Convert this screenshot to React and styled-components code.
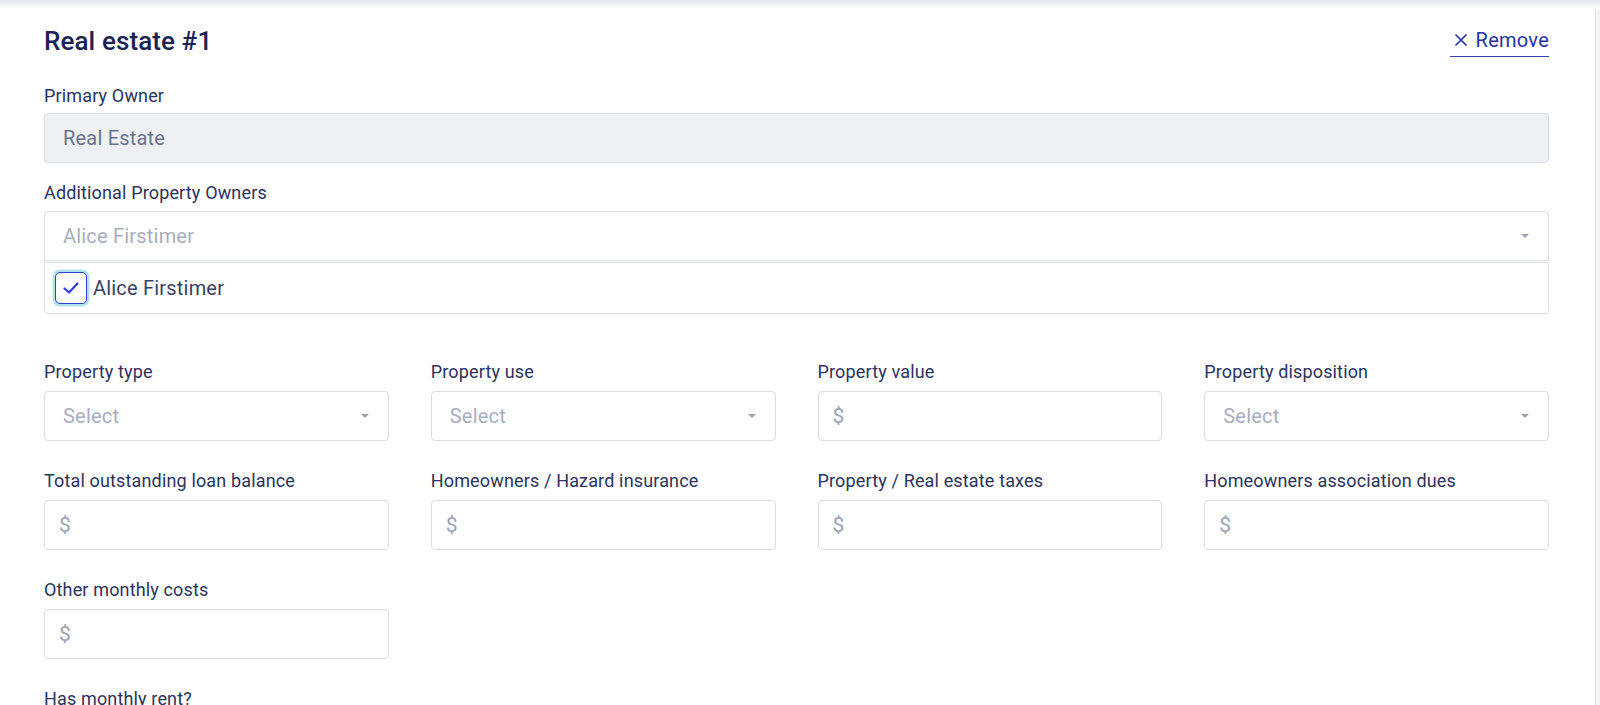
import React from "react";
import styled, { createGlobalStyle } from "styled-components";

const GlobalStyle = createGlobalStyle`
    html, body {
        margin: 0;
        padding: 0;
        background: #f4f5f8;
        font-family: Roboto, "Liberation Sans", Arial, sans-serif;
    }
    * {
        box-sizing: border-box;
    }
`

const Page = styled.div`
    display: flex;
    flex-direction: column;
    width: 1600px;
    height: 705px;
    overflow: hidden;
`

const TopShade = styled.div`
    height: 9px;
    flex: none;
    background: linear-gradient(to bottom, #e3e5ea, #f7f8fa 70%, #ffffff);
`

const Body = styled.div`
    display: flex;
    flex: 1;
    background: #ffffff;
`

const Card = styled.div`
    width: 1596px;
    padding: 16px 46px 0 44px;
    border-right: 1px solid #e1e3ea;
    background: #ffffff;
`

const Gutter = styled.div`
    flex: 1;
    background: #f3f4f7;
`

const Header = styled.div`
    display: flex;
    justify-content: space-between;
    align-items: flex-start;
    margin-bottom: 27px;
`

const Title = styled.h2`
    margin: 0;
    font-size: 26px;
    line-height: 32px;
    font-weight: 500;
    color: #1b2354;
    letter-spacing: 0.1px;
`

const RemoveLink = styled.a`
    display: flex;
    align-items: center;
    gap: 9px;
    margin-top: 3px;
    padding: 0 0 4px 5px;
    font-size: 20px;
    line-height: 24px;
    color: #2633a6;
    border-bottom: 1.5px solid #3543b8;
    cursor: pointer;
    letter-spacing: 0.25px;
`

const Field = styled.div`
    display: flex;
    flex-direction: column;
    margin-bottom: ${(p) => p.$mb || 0}px;
`

const Label = styled.label`
    font-size: 18px;
    line-height: 24px;
    color: #2b335e;
    margin-bottom: ${(p) => p.$gap || 7}px;
    letter-spacing: 0.15px;
`

const InputBox = styled.div`
    position: relative;
    display: flex;
    align-items: center;
    height: 50px;
    padding: 0 ${(p) => (p.$money ? 14 : 18)}px;
    border: 1px solid #dcdee7;
    border-radius: ${(p) => (p.$open ? "4px 4px 0 0" : "4px")};
    background: ${(p) => (p.$disabled ? "#eef0f4" : "#ffffff")};
    font-size: 20px;
    color: ${(p) => (p.$disabled ? "#6c7390" : "#a9adc0")};
    letter-spacing: 0.2px;
`

const Caret = styled.span`
    position: absolute;
    right: 19px;
    top: 50%;
    margin-top: -2px;
    width: 0;
    height: 0;
    border-left: 4.5px solid transparent;
    border-right: 4.5px solid transparent;
    border-top: 4.5px solid #9ea3b6;
`

const Dollar = styled.span`
    color: #9ca2b5;
    font-size: 21px;
`

const OptionList = styled.div`
    display: flex;
    align-items: center;
    gap: 6px;
    height: 52px;
    margin-top: 1px;
    padding: 0 8px;
    border: 1px solid #dcdee7;
    border-radius: 0 0 4px 4px;
    font-size: 20px;
    color: #3a4164;
    letter-spacing: 0.2px;
`

const CheckBox = styled.span`
    display: flex;
    align-items: center;
    justify-content: center;
    width: 32px;
    height: 32px;
    border: 1.5px solid #2b3fd6;
    border-radius: 5px;
    box-shadow: 0 0 0 2.5px #b3e3ea;
    background: #ffffff;
    margin-left: 2px;
`

const Grid = styled.div`
    display: grid;
    grid-template-columns: repeat(4, 1fr);
    column-gap: 42px;
    row-gap: 28px;
    margin-top: 46px;
`

const SectionLabel = styled(Label)`
    display: block;
    margin-top: 28px;
`

const SelectInput = ({ text, open }) => (
    <InputBox $open={open}>
        {text}
        <Caret />
    </InputBox>
)

const MoneyInput = () => (
    <InputBox $money>
        <Dollar>$</Dollar>
    </InputBox>
)

const gridFields = [
    { label: "Property type", kind: "select" },
    { label: "Property use", kind: "select" },
    { label: "Property value", kind: "money" },
    { label: "Property disposition", kind: "select" },
    { label: "Total outstanding loan balance", kind: "money" },
    { label: "Homeowners / Hazard insurance", kind: "money" },
    { label: "Property / Real estate taxes", kind: "money" },
    { label: "Homeowners association dues", kind: "money" },
    { label: "Other monthly costs", kind: "money" },
]

export default function App() {
    return (
        <Page>
            <GlobalStyle />
            <TopShade />
            <Body>
                <Card>
                    <Header>
                        <Title>Real estate #1</Title>
                        <RemoveLink>
                            <svg width="12" height="12" viewBox="0 0 12 12">
                                <path d="M1 1L11 11M11 1L1 11" stroke="#2633a6" strokeWidth="1.7" strokeLinecap="round" />
                            </svg>
                            Remove
                        </RemoveLink>
                    </Header>

                    <Field $mb={18}>
                        <Label $gap={5}>Primary Owner</Label>
                        <InputBox $disabled>Real Estate</InputBox>
                    </Field>

                    <Field>
                        <Label $gap={6}>Additional Property Owners</Label>
                        <SelectInput text="Alice Firstimer" open />
                        <OptionList>
                            <CheckBox>
                                <svg width="18" height="18" viewBox="0 0 18 18">
                                    <path d="M2.5 9.5L7 13.5L15.5 4.5" fill="none" stroke="#2b3fd6" strokeWidth="2.2" strokeLinecap="round" strokeLinejoin="round" />
                                </svg>
                            </CheckBox>
                            Alice Firstimer
                        </OptionList>
                    </Field>

                    <Grid>
                        {gridFields.map((f) => (
                            <Field key={f.label}>
                                <Label>{f.label}</Label>
                                {f.kind === "select" ? <SelectInput text="Select" /> : <MoneyInput />}
                            </Field>
                        ))}
                    </Grid>

                    <SectionLabel>Has monthly rent?</SectionLabel>
                </Card>
                <Gutter />
            </Body>
        </Page>
    )
}
